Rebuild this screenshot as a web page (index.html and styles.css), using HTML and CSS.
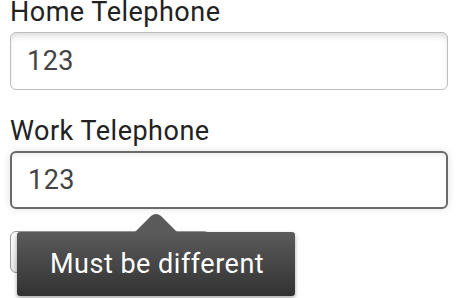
FILE: index.html
```html
<!DOCTYPE html>
<html lang="en">
<head>
    <meta charset="UTF-8">
    <title>Telephone form</title>
    <link rel="stylesheet" href="styles.css">
</head>
<body>
    <form id="phoneForm">
        <div class="field">
            <label class="field-label" for="homePhone">Home Telephone</label>
            <input id="homePhone" class="text-input" type="tel" value="123">
        </div>
        <div class="field">
            <label class="field-label" for="workPhone">Work Telephone</label>
            <input id="workPhone" class="text-input focused" type="tel" value="123">
        </div>
        <button class="submit-button" type="button"></button>

        <div class="tooltip">
            <svg class="tooltip-arrow" width="44" height="20" viewBox="0 0 44 20">
                <path d="M0 20 L17 3 Q22 -1 27 3 L44 20 Z" fill="#5a5a5a"/>
            </svg>
            <span class="tooltip-text">Must be different</span>
        </div>
    </form>
</body>
</html>
```

FILE: styles.css
```css
* {
    box-sizing: border-box;
}
html, body {
    height: 100%;
}
body {
    margin: 0;
    background: #fff;
    font-family: Roboto, "Noto Sans", sans-serif;
    overflow: hidden;
}
#phoneForm {
    position: relative;
    padding: 0 10px;
    margin-top: -3px;
}
.field {
    display: flex;
    flex-direction: column;
    gap: 5px;
    margin-bottom: 26px;
}
.field-label {
    font-size: 27px;
    line-height: 30px;
    letter-spacing: 0.5px;
    color: #222;
}
.text-input {
    width: 438px;
    height: 58px;
    padding: 0 16px;
    font-family: inherit;
    font-size: 27px;
    letter-spacing: 0.5px;
    color: #444;
    background: #fff;
    border: 1.5px solid #bdbdbd;
    border-radius: 6px;
    box-shadow: inset 0 5px 6px -2px rgba(0,0,0,0.14);
    outline: none;
}
.text-input.focused {
    border: 2px solid #6a6a6a;
    box-shadow: inset 0 4px 5px -2px rgba(0,0,0,0.08), 0 0 8px rgba(0,0,0,0.12);
}
.submit-button {
    display: block;
    margin-top: -4px;
    width: 200px;
    height: 42px;
    background: linear-gradient(#fdfdfd, #e4e4e4);
    border: 1.5px solid #9a9a9a;
    border-radius: 6px;
}
.tooltip {
    position: absolute;
    left: 17px;
    top: 235px;
    width: 278px;
    height: 64px;
    display: flex;
    align-items: center;
    padding-left: 33px;
    background: linear-gradient(#5b5b5b, #323232);
    border-radius: 3px;
    box-shadow: 0 2px 4px rgba(0,0,0,0.35);
}
.tooltip-arrow {
    position: absolute;
    left: 117px;
    top: -19px;
}
.tooltip-text {
    font-size: 27px;
    letter-spacing: 0.5px;
    color: #fff;
}
```
